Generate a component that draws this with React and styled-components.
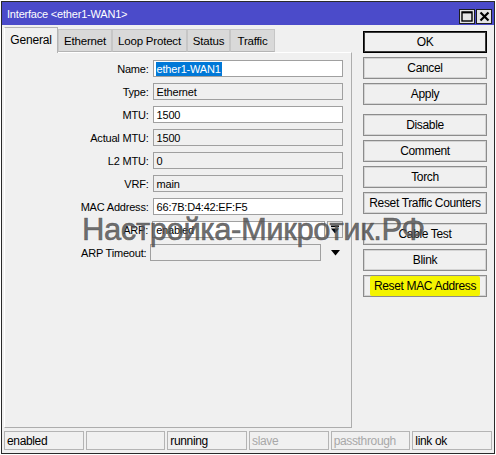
import React from "react";
import styled, { createGlobalStyle } from "styled-components";

const GlobalStyle = createGlobalStyle`
  html, body {
    margin: 0;
    background: #ffffff;
  }
  body {
    font-family: "Liberation Sans", Arial, sans-serif;
    font-size: 11px;
    letter-spacing: -0.2px;
    color: #000;
  }
`;

const tabs = [
  { name: "General", w: 54, active: true },
  { name: "Ethernet", w: 54 },
  { name: "Loop Protect", w: 75 },
  { name: "Status", w: 43 },
  { name: "Traffic", w: 45 },
];

const fields = [
  { label: "Name", value: "ether1-WAN1", kind: "edit", selected: true },
  { label: "Type", value: "Ethernet", kind: "ro" },
  { label: "MTU", value: "1500", kind: "edit" },
  { label: "Actual MTU", value: "1500", kind: "ro" },
  { label: "L2 MTU", value: "0", kind: "ro" },
  { label: "VRF", value: "main", kind: "ro" },
  { label: "MAC Address", value: "66:7B:D4:42:EF:F5", kind: "edit" },
  { label: "ARP", value: "enabled", kind: "select" },
  { label: "ARP Timeout", value: "", kind: "combo" },
];

const buttonGroups = [
  ["OK", "Cancel", "Apply"],
  ["Disable", "Comment", "Torch", "Reset Traffic Counters"],
  ["Cable Test", "Blink", "Reset MAC Address"],
];

const statusCells = [
  { text: "enabled" },
  { text: "" },
  { text: "running" },
  { text: "slave", dim: true },
  { text: "passthrough", dim: true },
  { text: "link ok" },
];

export default function App() {
  return (
    <>
      <GlobalStyle />
      <Frame>
        <TitleBar>
          <Title>Interface &lt;ether1-WAN1&gt;</Title>
          <TitleButtons>
            <TitleButton>
              <svg width="12" height="11" viewBox="0 0 12 11">
                <rect x="1" y="1" width="10" height="9" fill="none" stroke="#000" strokeWidth="1.4" />
                <line x1="1" y1="1.6" x2="11" y2="1.6" stroke="#000" strokeWidth="1.6" />
              </svg>
            </TitleButton>
            <TitleButton>
              <svg width="11" height="11" viewBox="0 0 11 11">
                <path d="M1.5 1.5 L9.5 9.5 M9.5 1.5 L1.5 9.5" stroke="#000" strokeWidth="2.2" />
              </svg>
            </TitleButton>
          </TitleButtons>
        </TitleBar>

        <Body>
          <TabArea>
            <TabStrip>
              {tabs.map((t) => (
                <Tab key={t.name} $w={t.w} $active={t.active}>
                  {t.name}
                </Tab>
              ))}
            </TabStrip>
            <Panel>
              {fields.map((f) => (
                <FieldRow key={f.label}>
                  <Label>{f.label}:</Label>
                  {f.kind === "select" ? (
                    <>
                      <Input $w={174} $ro={false}>{f.value}</Input>
                      <DropButton>
                        <svg width="10" height="9" viewBox="0 0 10 9">
                          <rect x="1" y="0.5" width="8" height="1.6" fill="#000" />
                          <polygon points="1,3.5 9,3.5 5,8.5" fill="#000" />
                        </svg>
                      </DropButton>
                    </>
                  ) : f.kind === "combo" ? (
                    <>
                      <Input $w={174} $ro>{f.value}</Input>
                      <ArrowSlot>
                        <svg width="9" height="6" viewBox="0 0 9 6">
                          <polygon points="0,0 9,0 4.5,5.5" fill="#000" />
                        </svg>
                      </ArrowSlot>
                    </>
                  ) : (
                    <Input $w={191} $ro={f.kind === "ro"}>
                      {f.selected ? <Selection>{f.value}</Selection> : f.value}
                    </Input>
                  )}
                </FieldRow>
              ))}
            </Panel>
          </TabArea>

          <Actions>
            {buttonGroups.map((group, gi) => (
              <ButtonGroup key={gi}>
                {group.map((label) => (
                  <ActionButton key={label} $default={label === "OK"}>
                    {label === "Reset MAC Address" ? <Marker>{label}</Marker> : label}
                  </ActionButton>
                ))}
              </ButtonGroup>
            ))}
          </Actions>
        </Body>

        <StatusBar>
          {statusCells.map((c, i) => (
            <StatusCell key={i} $dim={c.dim}>
              {c.text}
            </StatusCell>
          ))}
        </StatusBar>

        <Watermark>Настройка-Микротик.РФ</Watermark>
      </Frame>
    </>
  );
}

const Frame = styled.div`
  position: relative;
  box-sizing: border-box;
  margin: 1px 0 0 1px;
  width: 494px;
  height: 453px;
  border: 1px solid #2a2a2a;
  background: #f0f0f0;
  display: flex;
  flex-direction: column;
  overflow: hidden;
`;

const TitleBar = styled.div`
  height: 23px;
  background: #4b4bca;
  display: flex;
  align-items: center;
  justify-content: space-between;
  padding: 0 2px 0 5px;
`;

const Title = styled.div`
  color: #ffffff;
  font-size: 11px;
  padding-top: 1px;
`;

const TitleButtons = styled.div`
  display: flex;
  gap: 1px;
  margin-top: 5px;
`;

const TitleButton = styled.div`
  box-sizing: border-box;
  width: 16px;
  height: 15px;
  background: #e4e4e4;
  border: 1px solid #1e1e1e;
  display: flex;
  align-items: center;
  justify-content: center;
`;

const Body = styled.div`
  flex: 1;
  display: flex;
  padding: 2px 0 0 2px;
  min-height: 0;
`;

const TabArea = styled.div`
  width: 348px;
  display: flex;
  flex-direction: column;
`;

const TabStrip = styled.div`
  display: flex;
  align-items: flex-end;
  height: 25px;
  position: relative;
  z-index: 1;
`;

const Tab = styled.div`
  box-sizing: border-box;
  width: ${(p) => p.$w}px;
  height: ${(p) => (p.$active ? 26 : 23)}px;
  margin-bottom: ${(p) => (p.$active ? -1 : 0)}px;
  background: ${(p) => (p.$active ? "#f0f0f0" : "#d9d9d9")};
  border: 1px solid ${(p) => (p.$active ? "#b4b4b4" : "#c6c6c6")};
  border-bottom: ${(p) => (p.$active ? "none" : "1px solid #b4b4b4")};
  border-left-color: ${(p) => (p.$active ? "#ffffff" : "#c6c6c6")};
  display: flex;
  align-items: center;
  justify-content: center;
  font-size: ${(p) => (p.$active ? 12 : 11.5)}px;
  padding-bottom: ${(p) => (p.$active ? 2 : 0)}px;
`;

const Panel = styled.div`
  flex: 1;
  box-sizing: border-box;
  border: 1px solid #adadad;
  border-left-color: #ffffff;
  border-top-color: #ffffff;
  background: #f0f0f0;
  padding: 7px 8px 0 0;
  display: flex;
  flex-direction: column;
  gap: 6px;
`;

const FieldRow = styled.div`
  display: flex;
  align-items: center;
  height: 17px;
`;

const Label = styled.div`
  width: 144px;
  text-align: right;
  padding-right: 4px;
`;

const Input = styled.div`
  box-sizing: border-box;
  width: ${(p) => p.$w}px;
  height: 17px;
  border: 1px solid #a0a0a0;
  background: ${(p) => (p.$ro ? "#f0f0f0" : "#ffffff")};
  padding-left: 3px;
  display: flex;
  align-items: center;
  white-space: nowrap;
`;

const Selection = styled.span`
  background: #0078d7;
  color: #ffffff;
  padding: 0 1px;
  margin-left: -1px;
  line-height: 14px;
`;

const DropButton = styled.div`
  box-sizing: border-box;
  width: 16px;
  height: 17px;
  margin-left: 2px;
  border: 1px solid #a0a0a0;
  background: #f0f0f0;
  display: flex;
  align-items: center;
  justify-content: center;
`;

const ArrowSlot = styled.div`
  width: 16px;
  margin-left: 2px;
  display: flex;
  justify-content: center;
  padding-left: 4px;
`;

const Actions = styled.div`
  width: 124px;
  margin-left: 11px;
  padding-top: 4px;
  display: flex;
  flex-direction: column;
  gap: 9px;
`;

const ButtonGroup = styled.div`
  display: flex;
  flex-direction: column;
  gap: 4px;
`;

const ActionButton = styled.div`
  box-sizing: border-box;
  height: 22px;
  border: 1px solid ${(p) => (p.$default ? "#000000" : "#8c8c8c")};
  box-shadow: inset 0 0 0 1px ${(p) => (p.$default ? "#3a3a3a" : "#d4d4d4")};
  background: #f0f0f0;
  display: flex;
  align-items: center;
  justify-content: center;
  font-size: 12px;
  letter-spacing: -0.35px;
  white-space: nowrap;
`;

const Marker = styled.span`
  background: #f4f400;
  padding: 3px 4px 3px 4px;
  border-radius: 2px;
`;

const StatusBar = styled.div`
  display: grid;
  grid-template-columns: repeat(6, 1fr);
  gap: 2px;
  height: 19px;
  margin: 3px 2px 3px 2px;
`;

const StatusCell = styled.div`
  box-sizing: border-box;
  border: 1px solid #b4b4b4;
  padding-left: 2px;
  display: flex;
  align-items: center;
  color: ${(p) => (p.$dim ? "#a8a8a8" : "#000000")};
  font-size: 12px;
  letter-spacing: -0.35px;
  white-space: nowrap;
  overflow: hidden;
`;

const Watermark = styled.div`
  position: absolute;
  left: 80px;
  top: 212px;
  font-size: 31px;
  line-height: 32px;
  letter-spacing: -0.4px;
  color: rgba(80, 80, 80, 0.82);
  -webkit-text-stroke: 0.6px rgba(80, 80, 80, 0.82);
  white-space: nowrap;
  pointer-events: none;
`;
